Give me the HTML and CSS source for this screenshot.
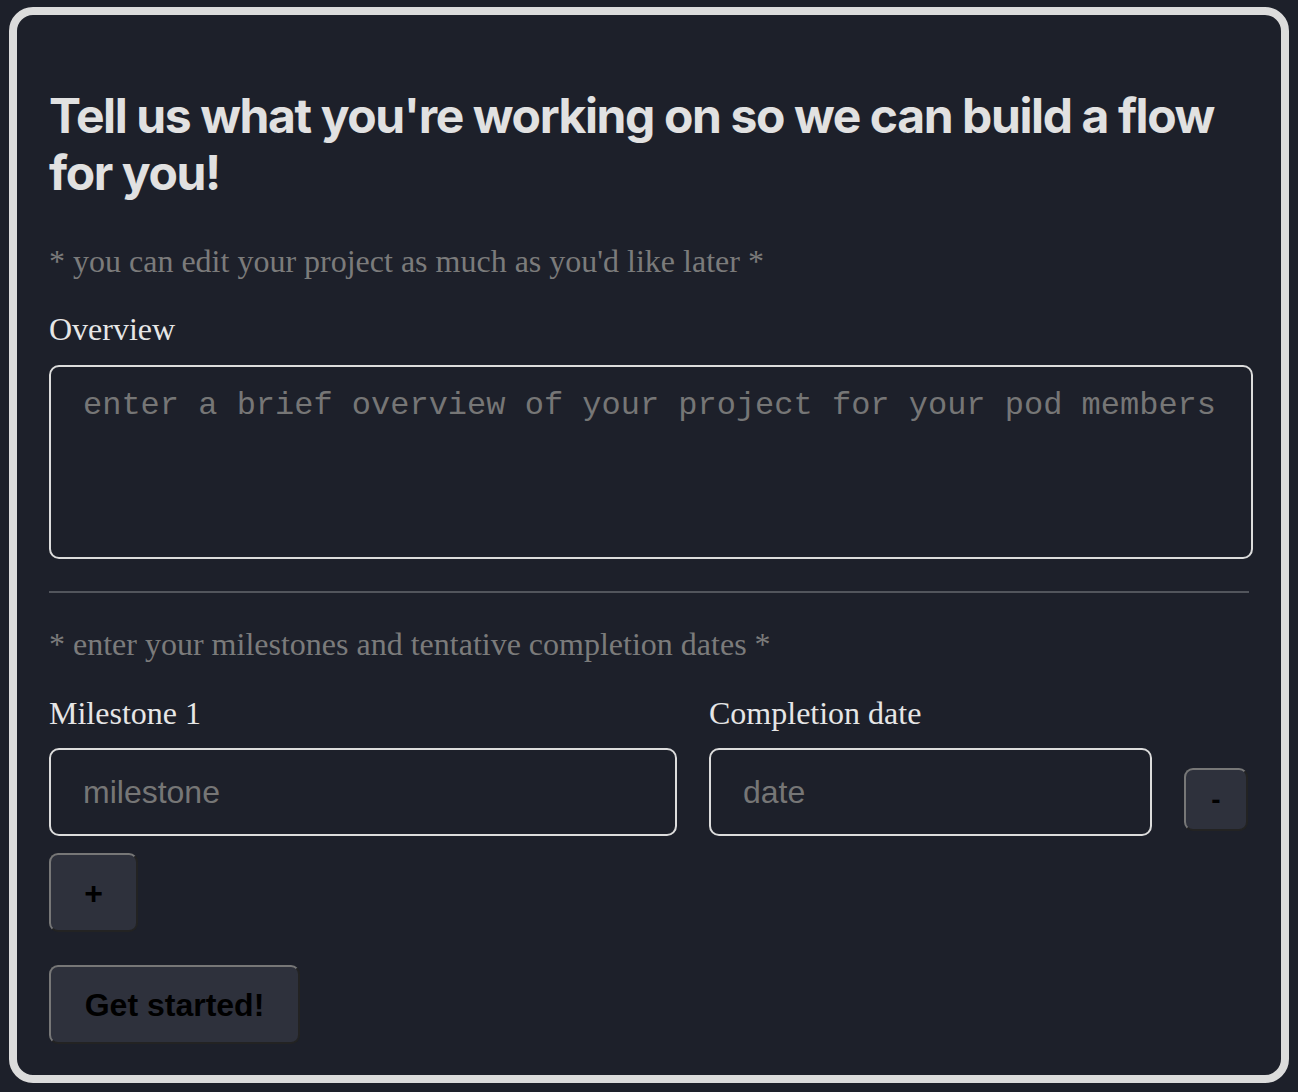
FILE: index.html
```html
<!DOCTYPE html>
<html>
<head>
<meta charset="utf-8">
<link rel="stylesheet" href="styles.css">
</head>
<body>
<div class="card">
  <h1 class="title">Tell us what you're working on so we can build a flow for you!</h1>
  <p class="note">* you can edit your project as much as you'd like later *</p>
  <label class="label label-overview">Overview</label>
  <textarea class="overview" placeholder="enter a brief overview of your project for your pod members"></textarea>
  <hr class="divider">
  <p class="note note-milestones">* enter your milestones and tentative completion dates *</p>
  <div class="milestone-row">
    <div class="field field-milestone">
      <label class="label">Milestone 1</label>
      <input class="text-input" type="text" placeholder="milestone">
    </div>
    <div class="field field-date">
      <label class="label">Completion date</label>
      <input class="text-input" type="text" placeholder="date">
    </div>
    <button class="btn btn-minus">-</button>
  </div>
  <button class="btn btn-plus">+</button>
  <button class="btn btn-start">Get started!</button>
</div>
</body>
</html>
```
FILE: styles.css
```css
html, body {
  margin: 0;
  padding: 0;
  background: #1d202a;
}
body {
  padding: 7px 9px 9px 9px;
}
.card {
  box-sizing: border-box;
  width: 1280px;
  height: 1076px;
  border: 8px solid #dcdcdc;
  border-radius: 24px;
  background: #1d202a;
  padding: 32px 32px 31px 32px;
  display: flex;
  flex-direction: column;
  align-items: flex-start;
}
.title {
  margin: 40px 0 0 0;
  font-family: Inter, "Noto Sans", sans-serif;
  font-weight: 700;
  font-size: 48px;
  line-height: 57px;
  letter-spacing: -1.4px;
  color: #e1e1e1;
  width: 1200px;
}
.note {
  margin: 42px 0 0 0;
  font-family: "Liberation Serif", serif;
  font-size: 32px;
  line-height: 36px;
  color: #7b7b7b;
}
.note-milestones {
  margin-top: 33px;
}
.label {
  display: block;
  font-family: "Liberation Serif", serif;
  font-size: 32px;
  line-height: 36px;
  color: #e6e6e6;
}
.label-overview {
  margin-top: 32px;
}
.overview {
  box-sizing: border-box;
  display: block;
  margin: 18px 0 0 0;
  width: 1204px;
  height: 194px;
  padding: 21px 32px 20px 32px;
  border: 2px solid #dcdcdc;
  border-radius: 10px;
  background: transparent;
  color: #e6e6e6;
  font-family: "Liberation Mono", monospace;
  font-size: 32px;
  line-height: 36px;
  resize: none;
  outline: none;
}
.overview::placeholder {
  color: #767676;
}
.divider {
  align-self: stretch;
  margin: 32px 0 0 0;
  border: none;
  height: 2px;
  background: #52555c;
}
.milestone-row {
  margin-top: 33px;
  display: flex;
  align-items: flex-end;
  gap: 32px;
  width: 1200px;
}
.field {
  display: flex;
  flex-direction: column;
  gap: 17px;
}
.field-milestone { width: 628px; }
.field-date { width: 443px; }
.text-input {
  box-sizing: border-box;
  width: 100%;
  height: 88px;
  padding: 0 32px;
  border: 2px solid #dcdcdc;
  border-radius: 10px;
  background: transparent;
  color: #e6e6e6;
  font-family: "Liberation Sans", Arial, sans-serif;
  font-size: 32px;
  outline: none;
}
.text-input::placeholder {
  color: #767676;
}
.btn {
  box-sizing: border-box;
  background: #2e313c;
  border: 2px solid;
  border-color: #777777 #232323 #232323 #777777;
  border-radius: 9px;
  color: #000;
  font-family: "Liberation Sans", Arial, sans-serif;
  font-weight: 700;
  font-size: 32px;
  line-height: 36px;
  padding: 0 32px;
  display: flex;
  align-items: center;
  justify-content: center;
}
.btn-minus {
  width: 64px;
  height: 63px;
  padding: 0;
  margin-bottom: 5px;
  font-size: 28px;
}
.btn-plus {
  margin-top: 17px;
  width: 89px;
  height: 79px;
  padding: 0;
}
.btn-start {
  margin-top: 33px;
  width: 251px;
  height: 79px;
  padding: 0;
}
```
